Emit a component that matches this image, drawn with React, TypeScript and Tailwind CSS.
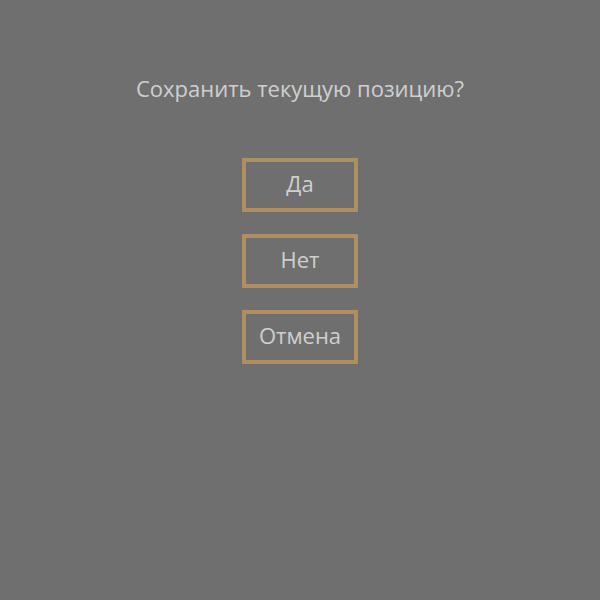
export default function App() {
  const buttons = ["Да", "Нет", "Отмена"];

  return (
    <div
      className="flex h-[600px] w-[600px] flex-col items-center bg-[#6f6f6f] pt-[73px] text-[#cfcfcf]"
      style={{ fontFamily: '"Open Sans", "Liberation Sans", sans-serif' }}
    >
      <h1 className="text-[22px] leading-[30px] font-normal">Сохранить текущую позицию?</h1>

      <div className="mt-[55px] flex flex-col gap-[22px]">
        {buttons.map((label) => (
          <button
            key={label}
            className="flex h-[54px] w-[116px] items-center justify-center border-4 border-[#b08e5f] pb-[3px] text-[22px] text-[#cfcfcf]"
          >
            {label}
          </button>
        ))}
      </div>
    </div>
  );
}
